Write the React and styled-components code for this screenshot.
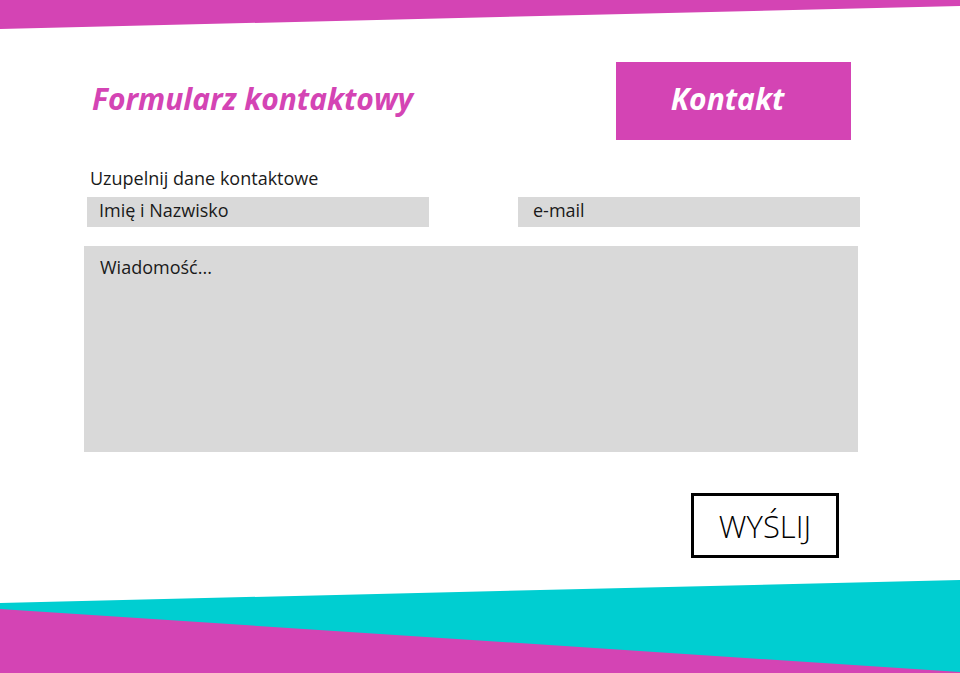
import styled, { createGlobalStyle } from "styled-components";

const PINK = "#d444b4";
const CYAN = "#00ced1";

const GlobalStyle = createGlobalStyle`
  html, body {
    margin: 0;
    padding: 0;
    background: #fff;
    font-family: "Open Sans", "Liberation Sans", sans-serif;
  }
`;

const TopBand = () => (
  <TopSvg viewBox="0 0 960 30" preserveAspectRatio="none">
    <polygon points="0,0 960,0 960,6 0,29" fill={PINK} />
  </TopSvg>
);

const BottomBand = () => (
  <BottomSvg viewBox="0 0 960 93" preserveAspectRatio="none">
    <polygon points="0,23 960,0 960,93 0,93" fill={CYAN} />
    <polygon points="0,29 960,92 960,93 0,93" fill={PINK} />
  </BottomSvg>
);

const App = () => {
  return (
    <Page>
      <GlobalStyle />
      <TopBand />
      <Header>
        <Title>Formularz kontaktowy</Title>
        <ContactBox>Kontakt</ContactBox>
      </Header>
      <Form onSubmit={(e) => e.preventDefault()}>
        <Label>Uzupelnij dane kontaktowe</Label>
        <InputRow>
          <Field placeholder="Imię i Nazwisko" $pad={12} />
          <Field placeholder="e-mail" $pad={15} />
        </InputRow>
        <Message placeholder="Wiadomość..." />
        <ButtonRow>
          <SendButton type="submit">WYŚLIJ</SendButton>
        </ButtonRow>
      </Form>
      <BottomBand />
    </Page>
  );
};

export default App;

const Page = styled.div`
  width: 960px;
  height: 673px;
  display: flex;
  flex-direction: column;
  overflow: hidden;
`;

const TopSvg = styled.svg`
  display: block;
  width: 960px;
  height: 30px;
  flex-shrink: 0;
`;

const BottomSvg = styled.svg`
  display: block;
  width: 960px;
  height: 93px;
  margin-top: auto;
  flex-shrink: 0;
`;

const Header = styled.div`
  display: flex;
  align-items: center;
  justify-content: space-between;
  margin-top: 32px;
  padding: 0 109px 0 92px;
`;

const Title = styled.h1`
  margin: 0;
  font-size: 30px;
  font-weight: 700;
  font-style: italic;
  color: ${PINK};
  transform: translateY(-3px);
`;

const ContactBox = styled.div`
  width: 235px;
  height: 78px;
  background: ${PINK};
  color: #fff;
  font-size: 30px;
  font-weight: 700;
  font-style: italic;
  display: flex;
  align-items: center;
  justify-content: center;
  padding: 0 12px 5px 0;
  box-sizing: border-box;
`;

const Form = styled.form`
  display: flex;
  flex-direction: column;
  padding: 0 102px 0 84px;
  margin-top: 26px;
`;

const Label = styled.div`
  font-size: 18px;
  color: #1a1a1a;
  line-height: 24px;
  margin-left: 6px;
`;

const InputRow = styled.div`
  display: flex;
  justify-content: space-between;
  margin: 7px -2px 0 3px;
`;

const Field = styled.input`
  width: 342px;
  height: 30px;
  box-sizing: border-box;
  border: none;
  outline: none;
  background: #d9d9d9;
  font-family: "Open Sans", "Liberation Sans", sans-serif;
  font-size: 18px;
  color: #1a1a1a;
  padding: 0 0 4px ${(p) => p.$pad}px;

  &::placeholder {
    color: #1a1a1a;
    opacity: 1;
  }
`;

const Message = styled.textarea`
  margin-top: 19px;
  width: 774px;
  height: 206px;
  box-sizing: border-box;
  border: none;
  outline: none;
  resize: none;
  background: #d9d9d9;
  font-family: "Open Sans", "Liberation Sans", sans-serif;
  font-size: 18px;
  line-height: 24px;
  color: #1a1a1a;
  padding: 9px 16px;

  &::placeholder {
    color: #1a1a1a;
    opacity: 1;
  }
`;

const ButtonRow = styled.div`
  display: flex;
  justify-content: flex-end;
  margin-top: 41px;
  padding-right: 19px;
`;

const SendButton = styled.button`
  width: 148px;
  height: 65px;
  box-sizing: border-box;
  border: 3px solid #000;
  background: #fff;
  font-family: "Open Sans", "Liberation Sans", sans-serif;
  font-size: 31px;
  font-weight: 300;
  color: #000;
  cursor: pointer;
  padding: 0;
`;
